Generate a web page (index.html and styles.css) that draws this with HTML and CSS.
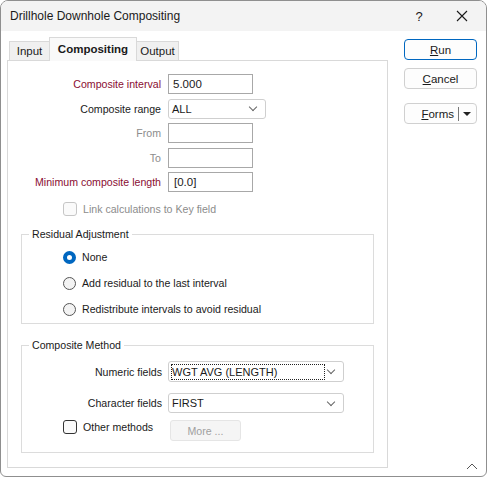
FILE: index.html
```html
<!DOCTYPE html>
<html lang="en">
<head>
    <meta charset="UTF-8">
    <title>Drillhole Downhole Compositing</title>
    <link rel="stylesheet" href="styles.css">
</head>
<body>
    <div class="window">
        <!-- title bar -->
        <div class="titlebar">
            <span class="title">Drillhole Downhole Compositing</span>
            <span class="tb-help">?</span>
            <span class="tb-close">
                <svg width="12" height="12" viewBox="0 0 12 12"><path d="M1 1L11 11M11 1L1 11" stroke="#1a1a1a" stroke-width="1.1" fill="none"/></svg>
            </span>
        </div>

        <div class="body">
            <div class="main">
                <!-- tabs -->
                <div class="tabs">
                    <div class="tab t-input">Input</div>
                    <div class="tab active">Compositing</div>
                    <div class="tab t-output">Output</div>
                </div>

                <div class="panel">
                    <div class="form-grid">
                        <label class="lbl req">Composite interval</label>
                        <div class="input w85">5.000</div>

                        <label class="lbl">Composite range</label>
                        <div class="combo w98"><span class="combo-text">ALL</span><span class="chev"></span></div>

                        <label class="lbl dim">From</label>
                        <div class="input w85"></div>

                        <label class="lbl dim">To</label>
                        <div class="input w85"></div>

                        <label class="lbl req">Minimum composite length</label>
                        <div class="input w85 pad">[0.0]</div>
                    </div>

                    <div class="check-row dim">
                        <span class="checkbox disabled"></span>
                        <span>Link calculations to Key field</span>
                    </div>

                    <fieldset class="group residual">
                        <legend>Residual Adjustment</legend>
                        <div class="radio-row"><span class="radio on"></span>None</div>
                        <div class="radio-row"><span class="radio"></span>Add residual to the last interval</div>
                        <div class="radio-row"><span class="radio"></span>Redistribute intervals to avoid residual</div>
                    </fieldset>

                    <fieldset class="group method">
                        <legend>Composite Method</legend>
                        <div class="method-grid">
                            <label class="lbl">Numeric fields</label>
                            <div class="combo w176 tall"><span class="combo-text"><span class="focus">WGT AVG (LENGTH)</span></span><span class="chev"></span></div>

                            <label class="lbl gap-top">Character fields</label>
                            <div class="combo w176 gap-top"><span class="combo-text">FIRST</span><span class="chev"></span></div>

                            <div class="check-row other">
                                <span class="checkbox"></span>
                                <span>Other methods</span>
                            </div>
                            <button class="btn-more" disabled>More ...</button>
                        </div>
                    </fieldset>
                </div>
            </div>

            <!-- side buttons -->
            <div class="side">
                <button class="btn default"><u>R</u>un</button>
                <button class="btn"><u>C</u>ancel</button>
                <button class="btn forms">
                    <span class="forms-text"><u>F</u>orms</span>
                    <span class="forms-sep"></span>
                    <span class="forms-arrow"></span>
                </button>
            </div>
        </div>

        <div class="grip">
            <svg width="12" height="8" viewBox="0 0 12 8"><path d="M1 7L6 2L11 7" stroke="#555" stroke-width="1" fill="none"/></svg>
        </div>
    </div>
</body>
</html>
```

FILE: styles.css
```css
body {
    margin: 0;
    font-family: "Liberation Sans", Arial, sans-serif;
    font-size: 10.6px;
    color: #1a1a1a;
    background: #fff;
}
.window {
    width: 487px;
    height: 477px;
    box-sizing: border-box;
    border: 1px solid #8f8f8f;
    border-radius: 8px 8px 6px 6px;
    background: #fff;
    overflow: hidden;
    display: flex;
    flex-direction: column;
}
.titlebar {
    height: 30px;
    flex: none;
    background: #f3f3f3;
    display: flex;
    align-items: center;
    padding-left: 9px;
}
.title {
    flex: 1;
    font-size: 12px;
    color: #1a1a1a;
}
.tb-help {
    width: 20px;
    text-align: center;
    font-size: 13px;
    margin-right: 27px;
}
.tb-close {
    width: 12px;
    height: 12px;
    margin-right: 18px;
    display: flex;
}
.body {
    flex: 1;
    display: flex;
    padding: 7px 0 0 6px;
}
.main {
    width: 381px;
    flex: none;
}

/* tabs */
.tabs {
    display: flex;
    align-items: flex-end;
    height: 22px;
    padding-left: 2px;
}
.tab {
    height: 19px;
    box-sizing: border-box;
    border: 1px solid #d9d9d9;
    border-bottom: none;
    background: #f0f0f0;
    line-height: 19px;
    text-align: center;
    font-size: 11.5px;
}
.t-input {
    width: 40px;
    border-right: none;
}
.t-output {
    width: 42px;
    border-left: none;
}
.tab.active {
    width: 88px;
    height: 24px;
    margin-bottom: -1px;
    background: #f9f9f9;
    font-weight: bold;
    padding-top: 2px;
}
.panel {
    height: 408px;
    box-sizing: border-box;
    border: 1px solid #d9d9d9;
    padding-top: 13px;
}

/* form */
.form-grid {
    display: grid;
    grid-template-columns: 153px auto;
    grid-auto-rows: 20px;
    column-gap: 7px;
    row-gap: 4.5px;
    align-items: center;
}
.lbl {
    text-align: right;
    white-space: nowrap;
}
.lbl.req {
    color: #8a0e32;
}
.dim {
    color: #8c8c8c;
}
.input {
    height: 20px;
    box-sizing: border-box;
    border: 1px solid #a8a8a8;
    padding: 0 4px;
    line-height: 18px;
    font-size: 11.5px;
}
.input.pad {
    padding-left: 5px;
}
.w85 { width: 85px; }
.w98 { width: 98px; }
.w176 { width: 176px; }
.combo {
    height: 20px;
    box-sizing: border-box;
    border: 1px solid #cfcfcf;
    border-radius: 3px;
    display: flex;
    align-items: center;
    padding-left: 3px;
    background: #fff;
    font-size: 11px;
}
.combo.tall {
    height: 21px;
}
.combo-text {
    flex: 1;
}
.chev {
    width: 5px;
    height: 5px;
    border-right: 1px solid #666;
    border-bottom: 1px solid #666;
    transform: rotate(45deg);
    margin: 0 9px 3px 0;
}
.focus {
    display: inline-block;
    width: 152px;
    border: 1px dotted #222;
    line-height: 14px;
    margin-left: -1px;
}
.check-row {
    display: flex;
    align-items: center;
    gap: 6px;
    height: 16px;
    white-space: nowrap;
    margin: 9px 0 0 55px;
}
.checkbox {
    width: 12px;
    height: 12px;
    flex: none;
    border: 1px solid #333;
    border-radius: 3px;
    background: #fafafa;
}
.checkbox.disabled {
    border-color: #c6c6c6;
}

/* group boxes */
.group {
    margin: 9px 13px 0;
    padding: 0 7px;
    border: 1px solid #dcdcdc;
}
.group legend {
    padding: 0 3px;
    line-height: 16px;
}
.residual {
    padding-top: 2px;
    padding-bottom: 1px;
}
.radio-row {
    display: flex;
    align-items: center;
    gap: 6px;
    height: 26px;
    margin-left: 34px;
}
.radio {
    width: 13px;
    height: 13px;
    box-sizing: border-box;
    border: 1px solid #555;
    border-radius: 50%;
    background: #f3f3f3;
}
.radio.on {
    border: 4px solid #0067c0;
    background: #fff;
}
.method {
    margin-top: 13px;
    padding-top: 8px;
    padding-bottom: 11px;
}
.method-grid {
    display: grid;
    grid-template-columns: 133px auto;
    column-gap: 6px;
    align-items: center;
}
.gap-top {
    margin-top: 11px;
}
.check-row.other {
    height: 14px;
    align-self: start;
    margin: 7px 0 0 34px;
    color: #1a1a1a;
}
.btn-more {
    margin: 7px 0 0 2px;
    width: 71px;
    height: 21px;
    border: 1px solid #e5e5e5;
    border-radius: 3px;
    background: #f5f5f5;
    color: #a0a0a0;
    font: inherit;
}

/* side buttons */
.side {
    display: flex;
    flex-direction: column;
    margin-left: 16px;
    padding-top: 1px;
}
.btn {
    width: 73px;
    height: 21px;
    box-sizing: border-box;
    border: 1px solid #d0d0d0;
    border-radius: 4px;
    background: #fdfdfd;
    font: inherit;
    font-size: 11.5px;
    color: #1a1a1a;
    padding: 0;
    margin-bottom: 8px;
}
.btn.default {
    border-color: #0067c0;
}
.btn.forms {
    margin-top: 6px;
    display: flex;
    align-items: center;
}
.forms-text {
    flex: 1;
    text-align: right;
    padding-right: 4px;
}
.forms-sep {
    width: 1px;
    height: 14px;
    background: #777;
}
.forms-arrow {
    width: 0;
    height: 0;
    border-left: 4px solid transparent;
    border-right: 4px solid transparent;
    border-top: 4px solid #222;
    margin: 0 5px 0 4px;
}
.grip {
    height: 0;
    display: flex;
    justify-content: flex-end;
    position: relative;
    top: -14px;
    padding-right: 8px;
}
```
